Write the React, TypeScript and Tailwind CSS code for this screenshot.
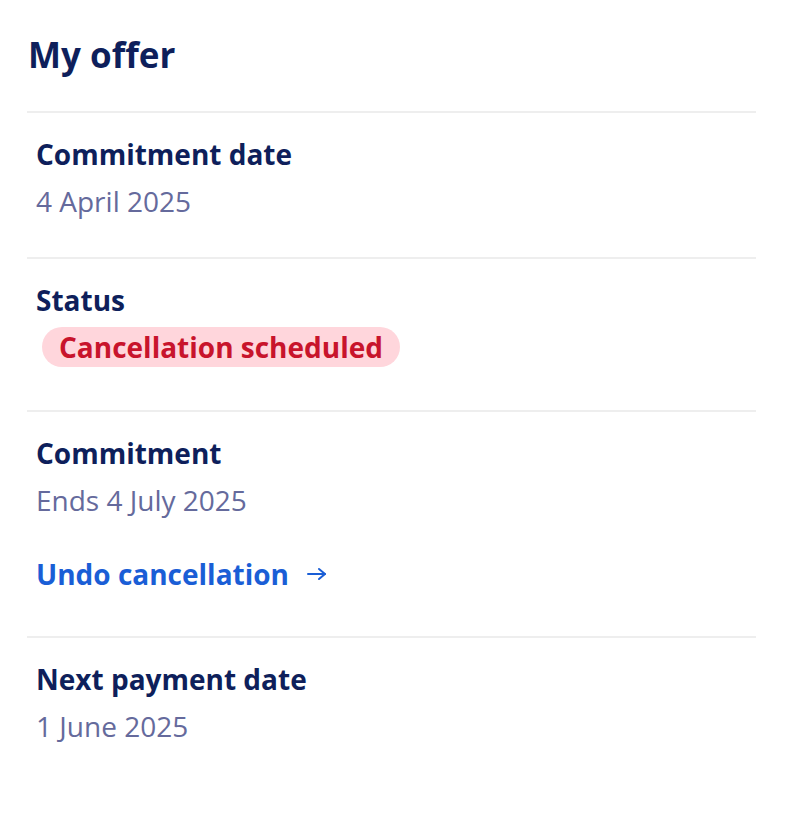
import React from "react";

const font = { fontFamily: "'Open Sans', 'Noto Sans', sans-serif" };

function Divider() {
  return <div className="h-[2px] w-full bg-[#eeeeee]" />;
}

export default function App() {
  return (
    <div className="w-[786px] h-[818px] bg-white pl-[27px] pr-[30px] pt-[31px]" style={font}>
      <h1 className="text-[35px] leading-[48px] font-bold text-[#0e1f5b] pl-[1px] mb-[32px]">My offer</h1>
      <Divider />
      <div className="pl-[9px] pt-[24px] pb-[39px]">
        <div className="text-[28px] leading-[34px] font-bold text-[#0e1f5b]">Commitment date</div>
        <div className="mt-[13px] text-[28px] leading-[34px] text-[#656a9c]">4 April 2025</div>
      </div>
      <Divider />
      <div className="pl-[9px] pt-[24px] pb-[43px]">
        <div className="text-[28px] leading-[34px] font-bold text-[#0e1f5b]">Status</div>
        <div className="mt-[10px] ml-[6px] inline-flex h-[40px] items-center rounded-full bg-[#ffd6dc] px-[17px] text-[28px] font-bold text-[#c8142c]">
          Cancellation scheduled
        </div>
      </div>
      <Divider />
      <div className="pl-[9px] pt-[24px] pb-[45px]">
        <div className="text-[28px] leading-[34px] font-bold text-[#0e1f5b]">Commitment</div>
        <div className="mt-[13px] text-[28px] leading-[34px] text-[#656a9c]">Ends 4 July 2025</div>
        <div className="mt-[40px] flex items-center gap-[17px] text-[28px] leading-[34px] font-bold text-[#1a5ed6]">
          <span>Undo cancellation</span>
          <svg width="22" height="16" viewBox="0 0 22 16" fill="none" stroke="#1a5ed6" strokeWidth="2" strokeLinecap="round" strokeLinejoin="round">
            <path d="M2 8h17" />
            <path d="M13 3l6 5-6 5" />
          </svg>
        </div>
      </div>
      <Divider />
      <div className="pl-[9px] pt-[24px]">
        <div className="text-[28px] leading-[34px] font-bold text-[#0e1f5b]">Next payment date</div>
        <div className="mt-[13px] text-[28px] leading-[34px] text-[#656a9c]">1 June 2025</div>
      </div>
    </div>
  );
}
